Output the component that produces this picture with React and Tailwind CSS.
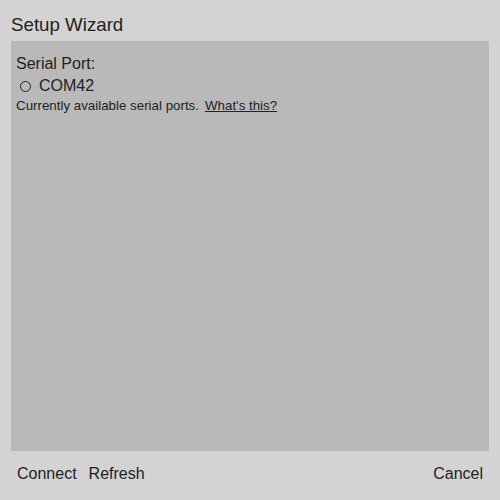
export default function App() {
  return (
    <div className="w-[500px] h-[500px] flex flex-col bg-[#d3d3d3] text-[#222]" style={{ fontFamily: '"Liberation Sans", Arial, sans-serif' }}>
      <div className="h-[41px] px-[11px] flex items-end pb-[5px]">
        <span className="text-[18.72px] leading-[22px]">Setup Wizard</span>
      </div>
      <div className="flex-1 mx-[11px] bg-[#b9b9b9] px-[5px] pt-[14px]">
        <div className="text-[16px] leading-[18px]">Serial Port:</div>
        <div className="flex items-center mt-[4px] text-[16px] leading-[18px]">
          <span className="ml-[4px] w-[11px] h-[11px] rounded-full border border-[#222] box-border"></span>
          <span className="ml-[8px]">COM42</span>
        </div>
        <div className="mt-[3px] text-[13.33px] leading-[16px] flex">
          <span>Currently available serial ports.</span>
          <span className="ml-[6px] underline">What's this?</span>
        </div>
      </div>
      <div className="h-[49px] px-[11px] pt-[7px] flex items-start text-[16px] leading-[24px]">
        <button className="px-[6px] py-[4px]">Connect</button>
        <button className="px-[6px] py-[4px]">Refresh</button>
        <div className="flex-1"></div>
        <button className="px-[6px] py-[4px]">Cancel</button>
      </div>
    </div>
  );
}
